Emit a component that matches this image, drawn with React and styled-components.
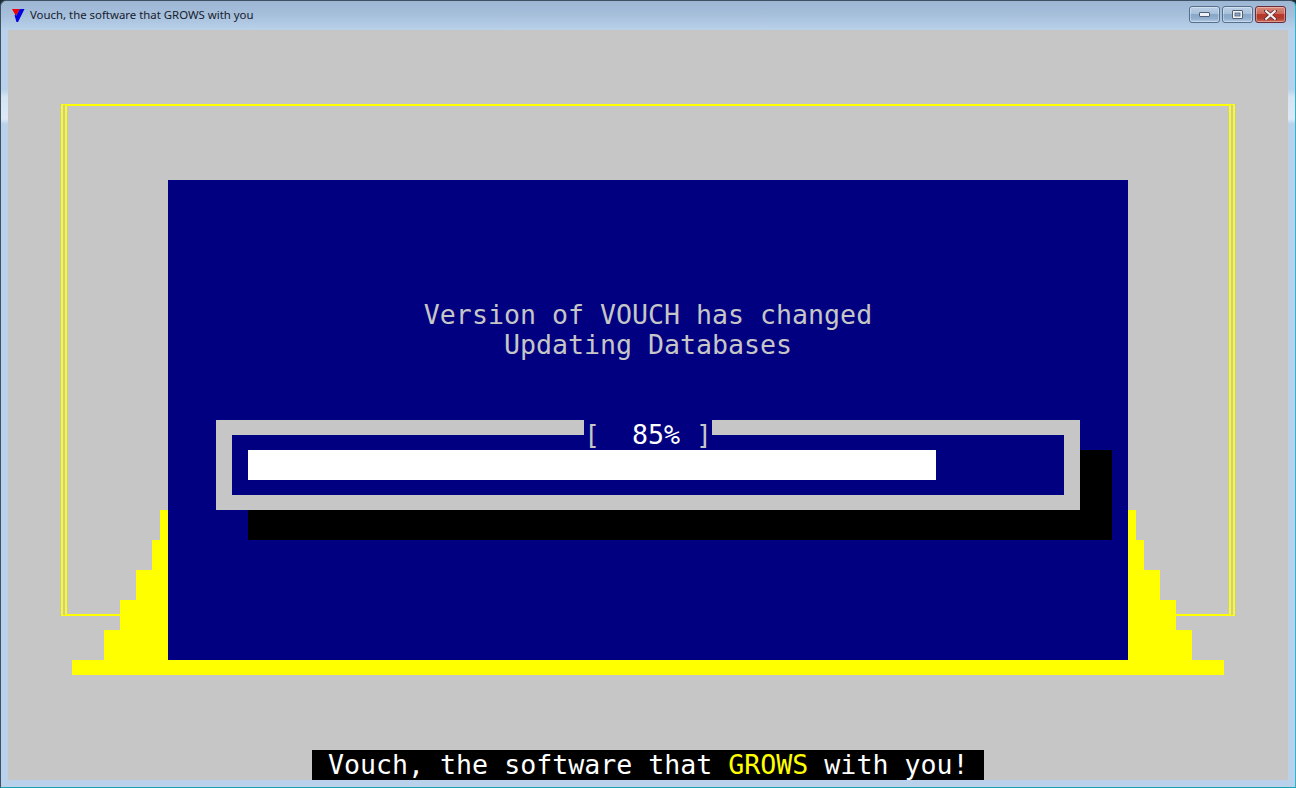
import React from "react";
import styled, { createGlobalStyle } from "styled-components";

const Global = createGlobalStyle`
  html, body { margin: 0; padding: 0; background: #1d2a33; overflow: hidden; }
`;

const CELL_W = 16;
const CELL_H = 30;
const GRAY = "#c6c6c6";
const BLUE = "#000080";
const YELLOW = "#ffff00";

const Window = styled.div`
  width: 1296px;
  height: 788px;
  box-sizing: border-box;
  display: flex;
  flex-direction: column;
  border-radius: 6px 6px 0 0;
  border: 1px solid #3c5264;
  border-right-color: #2ab6c8;
  border-bottom-color: #1c9fb4;
  background: linear-gradient(180deg, #9db6d3 0, #a6bfdb 14px, #b9d1ea 29px, #b9d1ea 88px, #d6e4f3 96px, #dde9f5 118px, #b9d1ea 123px, #b9d1ea 100%);
`;

const TitleBar = styled.header`
  height: 29px;
  flex: none;
  display: flex;
  align-items: center;
  padding: 0 9px 0 11px;
  box-sizing: border-box;
`;

const Logo = styled.svg`
  width: 13px;
  height: 13px;
  flex: none;
  margin-right: 5px;
  margin-top: -1px;
`;

const Title = styled.h1`
  margin: 0;
  flex: 1;
  font: 400 11.4px/16px "Noto Sans", "Open Sans", sans-serif;
  color: #16202e;
  margin-top: -2px;
`;

const Controls = styled.div`
  display: flex;
  gap: 2px;
  margin-top: -2px;
`;

const Control = styled.button`
  width: 31px;
  height: 17px;
  padding: 0;
  box-sizing: border-box;
  display: flex;
  align-items: center;
  justify-content: center;
  border: 1px solid ${(p) => (p.$danger ? "#6e2a35" : "#54708f")};
  border-radius: 3px;
  background: ${(p) =>
    p.$danger
      ? "linear-gradient(180deg, #d98a7c 0, #c9685a 45%, #b8392a 50%, #b23a2c 75%, #cd6d5a 100%)"
      : "linear-gradient(180deg, #bcd0e6 0, #a7c0da 45%, #89a7c8 50%, #8fadcd 75%, #b2cbe4 100%)"};
  box-shadow: inset 0 0 0 1px rgba(255, 255, 255, 0.35);
`;

const ClientRow = styled.main`
  flex: 1;
  display: flex;
  padding: 0 7px;
`;

const Screen = styled.div`
  display: grid;
  grid-template-columns: repeat(80, ${CELL_W}px);
  grid-template-rows: repeat(25, ${CELL_H}px);
  width: 1280px;
  height: 750px;
  background: ${GRAY};
  font-family: "DejaVu Sans Mono", monospace;
  font-size: 26.6px;
  line-height: ${CELL_H}px;
  white-space: pre;
`;

const Frame = styled.div`
  grid-column: 4 / 78;
  grid-row: 3 / 21;
  margin: 14px 5px 14px 5px;
  border-style: solid double;
  border-width: 2px 6px;
  border-color: ${YELLOW};
`;

const Stair = styled.div`
  grid-row: ${(p) => p.$row};
  width: ${(p) => p.$width}px;
  background: ${YELLOW};
  grid-column: ${(p) => (p.$side === "left" ? "1 / 11" : "71 / 81")};
  justify-self: ${(p) => (p.$side === "left" ? "end" : "start")};
`;

const Base = styled.div`
  grid-column: 5 / 77;
  grid-row: 22;
  height: 15px;
  background: ${YELLOW};
`;

const Panel = styled.section`
  grid-column: 11 / 71;
  grid-row: 6 / 22;
  background: ${BLUE};
`;

const Message = styled.p`
  grid-column: 11 / 71;
  grid-row: ${(p) => p.$row};
  margin: 0;
  text-align: center;
  color: ${GRAY};
`;

const Shadow = styled.div`
  grid-column: 16 / 70;
  grid-row: 15 / 18;
  background: #000;
`;

const Gauge = styled.div`
  grid-column: 14 / 68;
  grid-row: 14 / 17;
  box-sizing: border-box;
  padding: 15px 16px;
  background: ${GRAY};
  display: flex;
`;

const Track = styled.div`
  flex: 1;
  background: ${BLUE};
  padding: 15px 16px;
  display: flex;
`;

const Fill = styled.div`
  background: #fff;
`;

const Percent = styled.div`
  grid-column: 37 / 45;
  grid-row: 14;
  background: ${BLUE};
  color: #fff;
`;

const Bracket = styled.span`
  color: ${GRAY};
`;

const Caption = styled.footer`
  grid-column: 20 / 62;
  grid-row: 25;
  background: #000;
  color: #fff;
`;

const Highlight = styled.span`
  color: ${YELLOW};
`;

const stairs = [
  { row: 17, width: 8 },
  { row: 18, width: 16 },
  { row: 19, width: 32 },
  { row: 20, width: 48 },
  { row: 21, width: 64 },
];

const TRACK_CELLS = 51;

export default function App() {
  const progress = 85;
  const fillWidth = Math.floor((TRACK_CELLS * progress) / 100) * CELL_W;
  return (
    <>
      <Global />
      <Window>
        <TitleBar>
          <Logo viewBox="0 0 13 13">
            <polygon points="0,0 8,0 4,7" fill="#f00000" />
            <polygon points="8,0 12.5,0 6,13 4.5,13 2.6,6.5 3.5,5 4,7" fill="#0000e0" />
          </Logo>
          <Title>Vouch, the software that GROWS with you</Title>
          <Controls>
            <Control aria-label="Minimize">
              <svg width="11" height="5" viewBox="0 0 11 5">
                <rect x="0.5" y="0.5" width="10" height="4" rx="0.5" fill="#eef1f5" stroke="#4f5f75" />
              </svg>
            </Control>
            <Control aria-label="Maximize">
              <svg width="11" height="9" viewBox="0 0 11 9">
                <rect x="0.5" y="0.5" width="10" height="8" rx="0.5" fill="#eef1f5" stroke="#4f5f75" />
                <rect x="3" y="3" width="5" height="3" fill="#8ba8c8" stroke="#4f5f75" strokeWidth="0.8" />
              </svg>
            </Control>
            <Control $danger aria-label="Close">
              <svg width="13" height="10" viewBox="0 0 13 10">
                <path d="M2 1 L11 9 M11 1 L2 9" stroke="#5b2730" strokeWidth="3.6" strokeLinecap="square" />
                <path d="M2.2 1.2 L10.8 8.8 M10.8 1.2 L2.2 8.8" stroke="#f2f0f0" strokeWidth="2.2" strokeLinecap="square" />
              </svg>
            </Control>
          </Controls>
        </TitleBar>
        <ClientRow>
          <Screen>
            <Frame />
            {stairs.map((s) => (
              <React.Fragment key={s.row}>
                <Stair $side="left" $row={s.row} $width={s.width} />
                <Stair $side="right" $row={s.row} $width={s.width} />
              </React.Fragment>
            ))}
            <Base />
            <Panel />
            <Message $row={10}>Version of VOUCH has changed</Message>
            <Message $row={11}>Updating Databases</Message>
            <Shadow />
            <Gauge>
              <Track>
                <Fill style={{ width: fillWidth }} />
              </Track>
            </Gauge>
            <Percent>
              <Bracket>[</Bracket>
              {"  85% "}
              <Bracket>]</Bracket>
            </Percent>
            <Caption>
              {" Vouch, the software that "}
              <Highlight>GROWS</Highlight>
              {" with you! "}
            </Caption>
          </Screen>
        </ClientRow>
      </Window>
    </>
  );
}
